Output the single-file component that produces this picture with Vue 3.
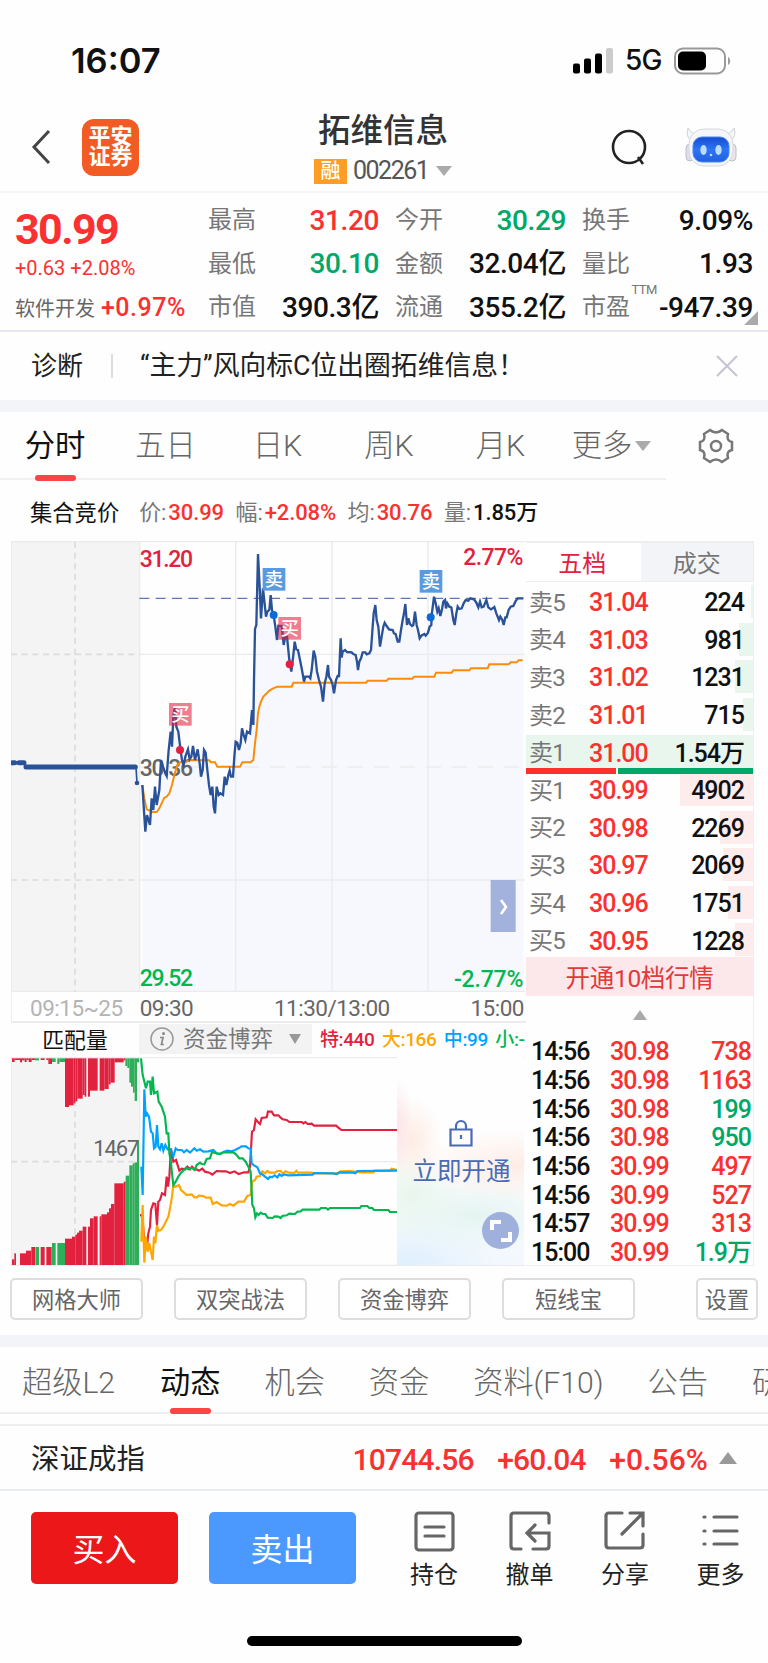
<script setup>
import { ref } from 'vue'

const stats = [
  { label: '最高', value: '31.20', tone: 'up' },
  { label: '今开', value: '30.29', tone: 'down' },
  { label: '换手', value: '9.09%' },
  { label: '最低', value: '30.10', tone: 'down' },
  { label: '金额', value: '32.04亿' },
  { label: '量比', value: '1.93' },
  { label: '市值', value: '390.3亿' },
  { label: '流通', value: '355.2亿' },
  { label: '市盈', value: '-947.39', ttm: true },
]

const periods = ['分时', '五日', '日K', '周K', '月K', '更多']
const activePeriod = ref('分时')

const summary = [
  { label: '价', value: '30.99', tone: 'up' },
  { label: '幅', value: '+2.08%', tone: 'up' },
  { label: '均', value: '30.76', tone: 'up' },
  { label: '量', value: '1.85万' },
]

const orders = [
  { label: '卖5', price: '31.04', volume: '224', depth: 1, side: 'sell' },
  { label: '卖4', price: '31.03', volume: '981', depth: 6, side: 'sell' },
  { label: '卖3', price: '31.02', volume: '1231', depth: 8, side: 'sell' },
  { label: '卖2', price: '31.01', volume: '715', depth: 4.4, side: 'sell' },
  { label: '卖1', price: '31.00', volume: '1.54万', depth: 100, side: 'sell' },
  { label: '买1', price: '30.99', volume: '4902', depth: 32, side: 'buy' },
  { label: '买2', price: '30.98', volume: '2269', depth: 14.6, side: 'buy' },
  { label: '买3', price: '30.97', volume: '2069', depth: 13.3, side: 'buy' },
  { label: '买4', price: '30.96', volume: '1751', depth: 11.2, side: 'buy' },
  { label: '买5', price: '30.95', volume: '1228', depth: 7.8, side: 'buy' },
]

const ticks = [
  { time: '14:56', price: '30.98', volume: '738', tone: 'up' },
  { time: '14:56', price: '30.98', volume: '1163', tone: 'up' },
  { time: '14:56', price: '30.98', volume: '199', tone: 'down' },
  { time: '14:56', price: '30.98', volume: '950', tone: 'down' },
  { time: '14:56', price: '30.99', volume: '497', tone: 'up' },
  { time: '14:56', price: '30.99', volume: '527', tone: 'up' },
  { time: '14:57', price: '30.99', volume: '313', tone: 'up' },
  { time: '15:00', price: '30.99', volume: '1.9万', tone: 'down' },
]

const tools = ['网格大师', '双突战法', '资金博弈', '短线宝']
const sections = ['超级L2', '动态', '机会', '资金', '资料(F10)', '公告', '研']
const activeSection = ref('动态')

// the charts are drawn in units of a third of a pixel
const priceLine =
  '427,765 436,905 441,855 450,885 455,805 460,840 465,770 470,825 478,780 483,690 489,710 496,730 500,738 506,660 512,605 516,650 520,560 525,530 529,590 535,605 541,655 546,690 551,705 556,680 564,658 569,688 574,680 579,648 585,690 593,658 599,700 603,740 608,720 612,660 617,668 622,720 627,765 632,795 637,770 641,830 645,850 650,770 656,795 661,790 669,795 674,740 679,765 685,735 689,722 693,740 699,740 703,680 707,635 712,638 717,660 722,640 726,595 731,615 736,630 741,605 750,610 756,540 760,585 762,450 765,297 769,285 774,72 779,170 783,265 789,175 798,260 802,245 808,240 812,195 816,240 821,255 826,290 831,330 835,287 845,288 851,345 856,318 861,320 868,390 874,425 880,375 884,335 889,358 894,360 900,390 906,420 912,455 916,440 927,440 931,445 935,420 941,362 946,380 951,425 957,450 963,470 969,515 974,460 979,440 984,405 987,440 993,450 998,465 1002,490 1008,450 1013,438 1017,438 1022,325 1025,383 1028,365 1035,360 1041,366 1055,367 1060,372 1067,375 1071,395 1074,420 1078,395 1083,385 1088,367 1096,367 1100,373 1108,370 1113,360 1118,290 1121,250 1126,225 1130,270 1135,290 1140,350 1145,320 1150,290 1154,278 1160,288 1167,298 1178,300 1182,310 1187,312 1193,335 1198,335 1203,300 1208,270 1212,250 1216,222 1221,285 1225,265 1230,282 1236,288 1240,285 1245,245 1250,285 1254,300 1259,325 1265,316 1273,312 1277,317 1284,308 1289,290 1294,285 1295,255 1302,200 1307,220 1312,245 1316,235 1321,258 1326,238 1330,215 1335,210 1338,235 1342,220 1348,230 1354,232 1360,270 1364,285 1369,250 1373,230 1378,237 1385,235 1391,220 1397,210 1405,212 1411,205 1422,208 1429,218 1435,232 1440,215 1445,232 1451,230 1459,210 1465,232 1473,238 1478,235 1483,231 1489,250 1497,270 1501,260 1507,270 1511,285 1516,262 1520,262 1526,240 1532,230 1540,228 1546,215 1553,205 1570,205'
const averageLine =
  '427,765 433,805 440,838 450,842 457,846 470,846 478,835 485,820 493,803 500,800 508,790 516,765 523,735 532,705 540,697 555,697 570,690 628,691 632,697 645,697 652,710 720,710 727,697 752,697 760,690 765,640 770,600 774,550 778,530 783,515 790,500 798,492 808,482 818,476 832,470 875,470 880,458 1098,458 1103,452 1160,452 1165,446 1237,446 1242,440 1303,440 1308,428 1355,428 1360,421 1408,421 1413,415 1463,415 1468,403 1526,403 1532,397 1550,397 1556,391 1568,391'

const flows = [
  {
    name: '特', value: '440', color: '#e2213f',
    points: '420,705 424,705 428,720 433,790 440,810 445,760 450,740 453,690 460,670 466,672 471,735 475,665 480,660 486,640 495,645 500,590 504,620 508,590 513,505 520,545 528,540 538,572 545,566 556,568 562,560 570,568 576,560 583,568 590,568 597,572 607,566 615,575 628,578 637,584 650,573 665,574 678,574 690,579 703,574 716,582 732,577 745,577 750,560 756,455 762,450 767,418 773,425 780,432 785,414 800,412 804,395 815,395 822,406 835,406 842,413 848,418 860,420 868,426 905,426 910,430 916,426 923,432 935,431 942,437 1008,437 1015,443 1024,450 1192,450',
  },
  {
    name: '大', value: '166', color: '#ffa600',
    points: '424,785 428,675 433,848 438,770 443,815 448,790 453,815 458,840 462,770 466,790 471,735 475,752 483,750 490,740 500,720 505,710 511,680 516,650 520,615 527,620 537,615 543,630 552,638 560,645 575,643 583,652 590,652 597,647 610,648 618,653 632,653 638,672 650,666 665,676 680,677 690,672 700,677 715,665 732,665 742,648 752,645 757,605 765,600 770,590 780,588 787,574 795,580 802,573 810,578 825,578 832,573 842,573 848,580 857,574 865,578 883,579 889,572 893,578 935,578 942,580 1015,580 1022,574 1050,573 1065,575 1080,577 1120,577 1125,572 1170,572 1175,566 1192,570',
  },
  {
    name: '中', value: '99', color: '#00a2ff',
    points: '424,560 428,645 433,328 437,410 441,400 447,410 453,455 458,460 462,505 467,500 471,435 475,500 480,508 485,490 490,512 496,495 503,508 510,508 515,515 520,530 527,505 533,510 545,510 552,517 560,510 570,518 583,505 590,512 600,508 610,515 625,514 640,510 650,520 660,522 672,515 682,512 695,514 705,510 715,505 725,499 738,499 745,505 752,506 755,550 762,556 772,562 780,580 787,583 795,590 804,597 810,590 816,592 824,586 832,592 838,583 845,588 852,583 865,586 938,584 942,579 1000,580 1010,582 1018,577 1060,578 1066,580 1072,573 1192,572',
  },
  {
    name: '小', value: '-', color: '#00b84f',
    points: '423,235 428,285 433,305 438,325 443,305 450,305 453,345 458,290 462,340 472,335 476,365 485,380 490,395 495,410 500,460 505,460 508,520 512,540 516,580 520,615 527,605 535,590 543,578 552,570 558,563 565,568 575,563 584,570 590,555 600,548 605,552 613,553 620,537 630,535 636,516 650,520 660,522 670,517 700,517 708,523 718,535 728,535 737,545 745,560 752,575 757,675 762,685 766,712 771,700 776,705 782,698 788,702 796,702 803,713 818,714 824,709 835,710 842,714 847,708 860,706 868,701 885,702 892,695 902,694 908,689 958,689 963,684 978,684 984,689 990,684 1080,684 1084,678 1102,678 1108,684 1117,684 1122,690 1165,690 1170,696 1192,696',
  },
]

// auction bars: [left, right, end, falling]
const matched = [
  [36, 43, 838], [43, 48, 820], [60, 78, 820], [78, 94, 812], [94, 105, 801], [106, 117, 801, 1],
  [122, 134, 801], [139, 155, 801], [156, 167, 789, 1], [172, 195, 789, 1], [195, 216, 776],
  [216, 226, 770], [226, 231, 764], [231, 237, 758], [237, 248, 752], [248, 259, 740],
  [264, 270, 740], [270, 281, 715], [281, 293, 709], [299, 304, 709], [304, 321, 703],
  [321, 327, 697], [327, 333, 685], [333, 343, 672], [343, 371, 610], [371, 377, 605],
  [377, 388, 587, 1], [388, 398, 556, 1], [398, 404, 550, 1], [404, 411, 547, 1], [411, 417, 480, 1],
]
const unmatched = [
  [36, 44, 246], [44, 60, 240], [60, 66, 247], [66, 74, 241], [74, 80, 246], [80, 86, 240],
  [86, 95, 246], [95, 105, 240], [105, 117, 241, 1], [122, 134, 240], [139, 145, 240], [145, 156, 252],
  [156, 167, 246, 1], [172, 178, 252, 1], [178, 195, 246, 1], [195, 207, 381], [207, 221, 376],
  [221, 226, 370], [226, 232, 364], [232, 248, 356], [248, 254, 345], [254, 259, 350],
  [264, 270, 350], [270, 293, 332], [299, 313, 332], [313, 326, 327], [326, 332, 313],
  [332, 344, 308], [344, 371, 247], [371, 376, 241], [376, 382, 258, 1], [382, 388, 264, 1],
  [388, 393, 308, 1], [393, 399, 320, 1], [399, 404, 338, 1], [404, 411, 363, 1], [411, 417, 247, 1],
]
</script>

<template>
  <div class="screen">
    <div class="status">
      <span class="clock">16:07</span>
      <div class="status-right">
        <svg class="signal" width="40" height="26" viewBox="0 0 40 26">
          <rect x="0" y="15.500" width="7" height="10" rx="2" />
          <rect x="11" y="10.500" width="7" height="15" rx="2" />
          <rect x="22" y="5.500" width="7" height="20" rx="2" />
          <rect x="33" y="0" width="7" height="25.500" rx="2" fill="#ccc" />
        </svg>
        <span class="network">5G</span>
        <svg width="58" height="28" viewBox="0 0 58 28">
          <rect x="1" y="1.500" width="50" height="25" rx="8" fill="none" stroke="#999" stroke-width="2" />
          <rect x="4" y="4.500" width="28" height="19" rx="5" />
          <path d="M54 10c3 2 3 6 0 8z" fill="#999" />
        </svg>
      </div>
    </div>

    <header class="header">
      <svg class="back" width="20" height="36" viewBox="0 0 20 36"><path d="M18 2L3 18l15 16" /></svg>
      <div class="logo"><span>平安</span><span>证券</span></div>
      <div class="heading">
        <h1>拓维信息</h1>
        <div class="code"><span class="margin-tag">融</span><span class="num">002261</span><i class="tri" /></div>
      </div>
      <svg class="search" width="38" height="38" viewBox="0 0 38 38"><circle cx="19" cy="19" r="16" /><path d="M28 29l5 7" /></svg>
      <svg width="52" height="42" viewBox="0 0 52 42">
        <defs>
          <linearGradient id="face" x1="0" y1="0" x2="0" y2="1"><stop offset="0" stop-color="#174bd0" /><stop offset=".5" stop-color="#2e74f5" /><stop offset="1" stop-color="#2160df" /></linearGradient>
        </defs>
        <path d="M3 2Q0 11 7 15L14 8Q7 9 3 2zM49 2q3 9-4 13l-7-7q7 1 11-6z" fill="#f4f6fa" stroke="#d0d3db" />
        <rect x="1" y="18" width="8" height="17" rx="4" fill="#dcdfe6" stroke="#bcc0ca" />
        <rect x="43" y="18" width="8" height="17" rx="4" fill="#eee3e6" stroke="#bcc0ca" />
        <rect x="4" y="3" width="44" height="37" rx="15" fill="#f5f6fa" stroke="#d5d8e0" />
        <rect x="8" y="11" width="36" height="25" rx="9" fill="url(#face)" stroke="#4485ff" />
        <ellipse cx="18.500" cy="24" rx="3.200" ry="5" fill="#b9dcff" /><ellipse cx="33.500" cy="24" rx="3.200" ry="5" fill="#b9dcff" />
        <circle cx="26" cy="29" r="1.300" fill="#b9dcff" />
      </svg>
    </header>

    <section class="quote">
      <div class="last">
        <strong class="up">30.99</strong>
        <p class="change up">+0.63 +2.08%</p>
        <p class="sector">软件开发 <b class="up">+0.97%</b></p>
      </div>
      <div class="stats">
        <div v-for="item in stats" :key="item.label" class="stat">
          <span>{{ item.label }}</span>
          <sup v-if="item.ttm">TTM</sup>
          <b :class="item.tone">{{ item.value }}</b>
        </div>
      </div>
      <i class="corner" />
    </section>

    <section class="notice">
      <span class="notice-title">诊断</span>
      <p>“主力”风向标C位出圈拓维信息！</p>
      <svg width="22" height="22" viewBox="0 0 22 22"><path d="M1 1l20 20M21 1L1 21" stroke="#c4c4d2" stroke-width="2" /></svg>
    </section>

    <nav class="periods">
      <ul>
        <li v-for="period in periods" :key="period" :class="{ active: period === activePeriod }" @click="activePeriod = period">
          {{ period }}<i v-if="period === '更多'" class="tri" />
        </li>
      </ul>
      <svg class="gear" width="36" height="36" viewBox="0 0 36 36">
        <path d="M12 2Q18 7 24 2L30 6Q28 13 34 14V22Q28 23 30 30L24 34Q18 29 12 34L6 30Q8 23 2 22V14Q8 13 6 6Z" />
        <circle cx="18" cy="18" r="5" />
      </svg>
    </nav>

    <div class="summary">
      <span class="auction">集合竞价</span>
      <span v-for="item in summary" :key="item.label" class="summary-item">{{ item.label }}:<b :class="item.tone">{{ item.value }}</b></span>
    </div>

    <main class="market">
      <div class="charts">
        <svg width="514" height="451" viewBox="33 33 1542 1353">
          <rect x="33" y="33" width="386" height="1353" fill="#f4f4f4" />
          <polygon :points="`427,1386 ${priceLine} 1570,1386`" fill="#f6f8fd" />
          <path class="grid" d="M33 35H1575M419 35V1386M707 35V1386M996 35V1386M1284 35V1386M419 373H1575M419 1050H1575M33 1384H1575M34 35V1386" />
          <path class="grid dashed-wide" d="M419 711H1570" />
          <path class="dashed" d="M225 36V1386M33 373H419M33 1050H419" />
          <path class="close" d="M418 205H1570" />
          <path class="preopen" d="M36 706V698H74L78 711H408L411 759" />
          <path class="preopen-thick" d="M38 698H44M57 698H72M78 711H406" />
          <circle cx="411" cy="759" r="7" fill="#2a5298" />
          <g class="labels" font-size="69">
            <text x="419" y="111" fill="#e2213f" textLength="160">31.20</text>
            <text x="419" y="738" fill="#666" textLength="160">30.36</text>
            <text x="419" y="1367" fill="#00b84f" textLength="160">29.52</text>
            <text x="1570" y="105" fill="#e2213f" text-anchor="end" textLength="180">2.77%</text>
            <text x="1570" y="1371" fill="#00b84f" text-anchor="end" textLength="208">-2.77%</text>
          </g>
          <polyline class="average" :points="averageLine" />
          <polyline class="price" :points="priceLine" />
          <g class="trades">
            <circle cx="540" cy="660" r="12" fill="#e2213f" />
            <circle cx="869" cy="403" r="12" fill="#e2213f" />
            <circle cx="821" cy="255" r="12" fill="#0a6bd6" />
            <circle cx="1292" cy="262" r="12" fill="#0a6bd6" />
            <rect x="507" y="519" width="68" height="68" fill="#e2213f" opacity=".58" />
            <rect x="835" y="261" width="68" height="68" fill="#e2213f" opacity=".58" />
            <rect x="788" y="114" width="68" height="68" fill="#5b9ade" />
            <rect x="1259" y="120" width="68" height="68" fill="#5b9ade" />
            <text x="541" y="574">买</text><text x="869" y="315">买</text>
            <text x="822" y="168">卖</text><text x="1293" y="174">卖</text>
          </g>
          <rect x="1472" y="1050" width="75" height="156" fill="#a3b2dc" />
          <path d="M1503 1110L1518 1131L1503 1152" fill="none" stroke="#fff" stroke-width="8" />
        </svg>
        <div class="axis">
          <span class="axis-auction">09:15~25</span>
          <span>09:30</span><span>11:30/13:00</span><span>15:00</span>
        </div>
        <div class="flow-head">
          <span class="match">匹配量</span>
          <div class="flow-select">
            <svg width="24" height="24" viewBox="0 0 24 24"><circle cx="12" cy="12" r="11" fill="none" stroke="#999" stroke-width="1.500" /><circle cx="13.500" cy="6.500" r="1.500" fill="#888" /><path d="M10 10.500h3l-1.600 7h2.500" fill="none" stroke="#888" stroke-width="1.700" /></svg>
            <span>资金博弈</span><i class="tri" />
          </div>
          <div class="flow-values">
            <span v-for="flow in flows" :key="flow.name" :style="{ color: flow.color }">{{ flow.name }}:{{ flow.value }}</span>
          </div>
        </div>
        <div class="flow">
          <svg width="514" height="209" viewBox="33 231 1542 627">
            <rect x="33" y="231" width="386" height="627" fill="#f4f4f4" />
            <path class="grid" d="M33 233H1575M419 545H1575M419 233V858M33 856H1575M34 233V856" />
            <path class="dashed" d="M225 233V856M33 545H419" />
            <rect v-for="bar in matched" :key="'m' + bar[0]" :x="bar[0]" :y="bar[2]" :width="bar[1] - bar[0]" :height="855 - bar[2]" :fill="bar[3] ? '#2fae59' : '#e2213f'" />
            <rect v-for="bar in unmatched" :key="'u' + bar[0]" :x="bar[0]" y="235" :width="bar[1] - bar[0]" :height="bar[2] - 235" :fill="bar[3] ? '#2fae59' : '#e2213f'" />
            <text x="280" y="528" class="match-value" textLength="138">1467</text>
            <polyline v-for="flow in flows" :key="flow.name" :points="flow.points" :stroke="flow.color" class="flow-line" />
          </svg>
          <div class="locked">
            <svg width="24" height="28" viewBox="0 0 24 28"><path d="M1.500 10.500h21v16h-21zM7 10V7a5 5 0 0 1 10 0v3M12 16v4" fill="none" stroke="#4a69b8" stroke-width="2.200" /></svg>
            <span>立即开通</span>
            <div class="expand">
              <svg width="22" height="22" viewBox="0 0 22 22"><path d="M2 10V2h9M20 12v8h-9" fill="none" stroke="#fff" stroke-width="4" /></svg>
            </div>
          </div>
        </div>
      </div>

      <aside class="book">
        <div class="book-tabs"><span class="active">五档</span><span>成交</span></div>
        <div class="orders">
          <div v-for="order in orders" :key="order.label" class="order" :class="order.side">
            <i class="depth" :style="{ width: order.depth + '%' }" />
            <span>{{ order.label }}</span>
            <b class="up">{{ order.price }}</b>
            <b class="volume">{{ order.volume }}</b>
          </div>
          <div class="ratio"><i /><i /></div>
        </div>
        <div class="upgrade">开通10档行情</div>
        <div class="collapse"><i class="tri tri-up" /></div>
        <ul class="ticks">
          <li v-for="(tick, index) in ticks" :key="index">
            <span>{{ tick.time }}</span><span class="up">{{ tick.price }}</span><span :class="tick.tone">{{ tick.volume }}</span>
          </li>
        </ul>
      </aside>
    </main>

    <div class="tools">
      <button v-for="tool in tools" :key="tool">{{ tool }}</button>
      <button class="settings">设置</button>
    </div>

    <nav class="sections">
      <span v-for="section in sections" :key="section" :class="{ active: section === activeSection }" @click="activeSection = section">{{ section }}</span>
    </nav>

    <div class="index">
      <span>深证成指</span>
      <b>10744.56</b><b>+60.04</b><b class="percent">+0.56%</b>
      <i class="tri tri-up" />
    </div>

    <footer class="footer">
      <button class="buy">买入</button>
      <button class="sell">卖出</button>
      <div class="actions">
        <a>
          <svg width="42" height="42" viewBox="0 0 42 42"><rect x="3" y="2" width="37" height="37" rx="3" /><path d="M12 16h19M12 25h19" /></svg>
          持仓
        </a>
        <a>
          <svg width="42" height="42" viewBox="0 0 42 42"><path d="M40 12V5q0-3-3-3H5Q2 2 2 5v30q0 3 3 3h7M24 38h13q3 0 3-3V22H19M26 14l-8 8 8 8" /></svg>
          撤单
        </a>
        <a>
          <svg width="42" height="42" viewBox="0 0 42 42"><path d="M18 2H5Q2 2 2 5v29q0 3 3 3h31q3 0 3-3V23M26 2h13v13M38 3L18 23" /></svg>
          分享
        </a>
        <a>
          <svg width="42" height="42" viewBox="0 0 42 42"><path d="M14 6h23M14 20h23M14 33h23" /><path d="M4 6h1M4 20h1M4 33h1" /></svg>
          更多
        </a>
      </div>
    </footer>
    <div class="home-bar" />
  </div>
</template>

<style>
body {
  background: #fefefe;
}
</style>

<style scoped>
.screen {
  display: flex;
  flex-direction: column;
  width: 768px;
  height: 1663px;
  overflow: hidden;
  background: #fefefe;
  color: #111;
  font-family: Roboto, "Noto Sans CJK SC", sans-serif;
  line-height: 1.2;

  & > * {
    flex-shrink: 0;
  }

  & * {
    box-sizing: border-box;
  }

  & b,
  & strong {
    font-weight: 500;
  }

  & p,
  & h1,
  & ul {
    margin: 0;
    padding: 0;
    list-style: none;
  }

  & button {
    padding: 0;
    border: 0;
    font-family: inherit;
    line-height: 1.2;
  }
}

.screen .up {
  color: #fb3030;
}

.screen .down {
  color: #00a868;
}

.tri {
  display: inline-block;
  border: 8px solid transparent;
  border-top: 10px solid #aaa;
  border-bottom: 0;
}

.tri-up {
  border-top: 0;
  border-bottom: 10px solid #aaa;
}

.status {
  display: flex;
  justify-content: space-between;
  height: 96px;
  padding: 26px 36px 0 71px;
  font-family: Inter, sans-serif;
}

.clock {
  font-size: 34.5px;
  font-weight: 600;
  line-height: 70px;
}

.status-right {
  display: flex;
  align-items: center;
  height: 70px;

  & .network {
    width: 38px;
    margin: 0 11px 0 12px;
    font-size: 28px;
    font-weight: 500;
    letter-spacing: -0.7px;
  }
}

.header {
  display: flex;
  align-items: center;
  height: 97px;
  padding: 7px 31px 0 31px;
  border-bottom: 2px solid #f7f7f7;
}

.back path {
  fill: none;
  stroke: #444;
  stroke-width: 3;
}

.logo {
  display: flex;
  flex-direction: column;
  justify-content: center;
  width: 57px;
  height: 57px;
  margin-left: 31px;
  border-radius: 12px;
  background: #f25b24;
  color: #fff;
  font-size: 22px;
  font-weight: 700;
  line-height: 20px;
  text-align: center;
}

.heading {
  display: flex;
  flex-direction: column;
  align-items: center;
  width: 458px;
  height: 88px;
  margin-left: 15px;

  & h1 {
    margin-top: 6px;
    color: #333;
    font-size: 32.5px;
    font-weight: 500;
    line-height: 44px;
  }
}

.code {
  display: flex;
  align-items: center;
  margin-top: 3px;
  color: #555;
  font-size: 25px;
  line-height: 30px;

  & .margin-tag {
    width: 33px;
    height: 25px;
    margin-right: 6px;
    background: #ff9c26;
    color: #fff;
    font-size: 20px;
    font-weight: 500;
    line-height: 25px;
    text-align: center;
  }

  & .num {
    width: 83px;
    letter-spacing: -1.5px;
  }
}

.search {
  margin: 0 37px 0 -2px;
  fill: none;
  stroke: #222;
  stroke-width: 2.6;
}

.quote {
  position: relative;
  display: flex;
  height: 139px;
  border-bottom: 2px solid #e6e7f0;
}

.last {
  width: 208px;
  padding: 13px 0 0 15px;

  & strong {
    display: block;
    font-size: 43px;
    font-weight: 700;
    line-height: 46px;
    letter-spacing: -1.6px;
  }

  & .change {
    margin-top: 5px;
    font-size: 20px;
    line-height: 22px;
    letter-spacing: 0;
  }

  & .sector {
    margin-top: 12px;
    color: #666;
    font-size: 20px;
    line-height: 34px;
    white-space: nowrap;
  }

  & .sector b {
    margin-left: 1px;
    font-size: 25px;
    letter-spacing: 0.5px;
  }
}

.stats {
  display: grid;
  grid-template-columns: 171px 171px 171px;
  grid-template-rows: repeat(3, 43.5px);
  column-gap: 16px;
  padding-top: 6px;
}

.stat {
  display: flex;
  align-items: center;
  justify-content: space-between;
  color: #777;
  font-size: 24px;

  & b {
    color: #111;
    font-size: 28px;
    letter-spacing: -0.4px;
    white-space: nowrap;
  }

  & sup {
    width: 24px;
    margin: -36px -12px 0 -14px;
    font-size: 13px;
    line-height: 14px;
    letter-spacing: -0.5px;
  }
}

.corner {
  position: absolute;
  right: 10px;
  bottom: 5px;
  border: 7px solid #aaa;
  border-top-color: transparent;
  border-left-color: transparent;
}

.notice {
  display: flex;
  align-items: center;
  height: 80px;
  padding: 0 30px 0 31px;
  border-bottom: 12px solid #f3f4f9;
  color: #222;
  font-size: 26.8px;

  & .notice-title {
    width: 82px;
    height: 24px;
    border-right: 2px solid #ddd;
    font-size: 26px;
    line-height: 24px;
  }

  & p {
    flex: 1;
    padding: 1px 0 0 27px;
  }
}

.periods {
  display: flex;
  align-items: center;
  height: 68px;

  & ul {
    display: grid;
    grid-template-columns: 110px 111px 113px 110px 113px 109px;
    width: 666px;
    height: 68px;
    border-bottom: 2px solid #f0f0f0;
  }

  & li {
    position: relative;
    justify-self: center;
    color: #666;
    font-size: 30.3px;
    font-weight: 300;
    line-height: 68px;
    white-space: nowrap;
  }

  & li .tri {
    margin: 0 0 5px 3px;
  }

  & .gear {
    margin-left: 32px;
    fill: none;
    stroke: #777;
    stroke-width: 2.5;
  }
}

.periods li.active,
.sections .active {
  color: #111;
  font-weight: 400;
}

.periods li.active::after,
.sections .active::after {
  content: "";
  position: absolute;
  bottom: -1px;
  left: calc(50% - 20px);
  width: 41px;
  height: 6px;
  border-radius: 3px;
  background: #fa4548;
}

.summary {
  display: flex;
  align-items: center;
  height: 61px;
  padding: 5px 0 0 30px;
  font-size: 22px;
  white-space: nowrap;

  & .auction {
    margin-right: 20px;
    font-size: 22.3px;
  }

  & .summary-item {
    margin-right: 11.5px;
    color: #777;
    letter-spacing: -0.1px;
  }

  & b {
    margin-left: 2px;
    color: #111;
  }
}

.market {
  display: flex;
  height: 725px;
  padding-left: 11px;
}

.charts {
  width: 515px;

  & svg {
    display: block;
  }
}

.grid {
  fill: none;
  stroke: #ebebed;
  stroke-width: 4;
}

.dashed {
  fill: none;
  stroke: #dcdcdc;
  stroke-width: 5;
  stroke-dasharray: 18 14;
}

.dashed-wide {
  stroke-dasharray: 46 32;
}

.close {
  stroke: #5b78b4;
  stroke-width: 4;
  stroke-dasharray: 30 19;
}

.preopen {
  fill: none;
  stroke: #2a5298;
  stroke-width: 5;
}

.preopen-thick {
  fill: none;
  stroke: #2a5298;
  stroke-linecap: round;
  stroke-width: 15;
}

.average {
  fill: none;
  stroke: #fb8c0a;
  stroke-width: 6;
}

.price {
  fill: none;
  stroke: #2a5298;
  stroke-width: 7;
}

.labels {
  font-weight: 500;
}

.trades text {
  fill: #fff;
  font-size: 55px;
  font-weight: 500;
  text-anchor: middle;
}

.match-value {
  fill: #666;
  font-size: 66px;
}

.flow-line {
  fill: none;
  stroke-width: 6.5;
}

.axis {
  display: flex;
  justify-content: space-between;
  align-items: center;
  height: 31px;
  padding: 4px 2px 0 0;
  border-left: 1px solid #eee;
  border-bottom: 2px solid #ececec;
  color: #666;
  font-size: 22.5px;
  letter-spacing: -0.5px;

  & .axis-auction {
    width: 128px;
    margin-right: -81px;
    padding-left: 18px;
    color: #b4b4b4;
  }
}

.flow-head {
  display: flex;
  align-items: center;
  height: 34px;
  overflow: hidden;

  & .match {
    width: 128px;
    padding-top: 2px;
    font-size: 21.8px;
    text-align: center;
  }

  & .flow-values {
    display: flex;
    gap: 7.5px;
    width: 205px;
    margin-left: 8px;
    font-size: 19px;
    font-weight: 500;
    line-height: 30px;
    letter-spacing: -0.4px;
    white-space: nowrap;
  }
}

.flow-select {
  display: flex;
  align-items: center;
  width: 173px;
  height: 30px;
  margin-bottom: 2px;
  padding-left: 11px;
  background: #f3f3f3;
  color: #777;
  font-size: 22.5px;

  & span {
    margin: 0 16px 0 9px;
  }

  & .tri {
    border-width: 10px 6px 0;
    border-top-color: #999;
  }
}

.flow {
  position: relative;
}

.locked {
  position: absolute;
  top: 0;
  right: 2px;
  display: flex;
  flex-direction: column;
  align-items: center;
  width: 127px;
  height: 208px;
  padding-top: 62px;
  background:
    radial-gradient(ellipse 16px 50px at 0 33%, #fce4e8, transparent),
    radial-gradient(ellipse 30px 45px at 12% 40%, #fdece4, transparent),
    radial-gradient(ellipse 100px 36px at 95% 52%, #fdece6, transparent),
    radial-gradient(ellipse 50px 45px at 12% 66%, #e8f6ed, transparent),
    radial-gradient(ellipse 100px 40px at 60% 76%, #e4f4f1, transparent),
    radial-gradient(ellipse 90px 50px at 10% 100%, #dfeffd, transparent),
    linear-gradient(#fefefe 50%, #f3f8fe);
  color: #4a69b8;

  & span {
    margin: 7px 0 0 2px;
    font-size: 24.5px;
    line-height: 36px;
  }
}

.expand {
  position: absolute;
  right: 5px;
  bottom: 16px;
  display: flex;
  align-items: center;
  justify-content: center;
  width: 37px;
  height: 37px;
  border-radius: 50%;
  background: #9fb0dc;
}

.book {
  width: 228px;
  border: 1px solid #eee;
  border-width: 2px 1px 1px 0;
}

.book-tabs {
  display: flex;
  height: 39px;
  border-bottom: 1px solid #eee;
  color: #777;
  font-size: 24px;
  line-height: 42px;
  text-align: center;

  & span {
    flex: 1;
    background: #f3f4f8;
  }

  & .active {
    padding-right: 2px;
    background: #fff;
    color: #e2213f;
  }
}

.orders {
  position: relative;
  padding-top: 2px;
}

.order {
  position: relative;
  display: flex;
  align-items: center;
  height: 37.6px;
  padding: 1px 9px 0 3px;
  color: #777;
  font-size: 24px;

  & span {
    position: relative;
    width: 60px;
    letter-spacing: -0.8px;
  }

  & b {
    position: relative;
    font-size: 25px;
    letter-spacing: -1px;
  }

  & .volume {
    flex: 1;
    color: #111;
    text-align: right;
  }

  & .depth {
    position: absolute;
    top: 1px;
    right: 0;
    height: 33px;
    background: #e9f6ee;
  }

  &.buy .depth {
    background: #feebeb;
  }
}

.ratio {
  position: absolute;
  top: 186px;
  left: 0;
  display: grid;
  grid-template-columns: 90px 1fr;
  gap: 2px;
  width: 100%;
  height: 6px;

  & i {
    background: #fb3030;
  }

  & i + i {
    background: #00a868;
  }
}

.upgrade {
  height: 39px;
  margin-top: -3px;
  background: #fce8ea;
  color: #e03a3c;
  font-size: 24.5px;
  line-height: 43px;
  text-align: center;
  letter-spacing: -0.3px;
}

.collapse {
  display: flex;
  align-items: flex-start;
  justify-content: center;
  height: 42px;
  padding-top: 14px;

  & .tri {
    border-width: 0 7px 10px;
  }
}

.ticks li {
  display: grid;
  grid-template-columns: 79px 60px 1fr;
  align-items: center;
  height: 28.7px;
  padding: 0 2px 0 5px;
  font-size: 25px;
  line-height: 28px;
  letter-spacing: -1px;

  & span {
    font-weight: 500;
  }

  & span:last-child {
    text-align: right;
  }
}

.tools {
  display: flex;
  gap: 31px;
  height: 81px;
  padding: 12px 10px 0 10px;
  border-bottom: 12px solid #f3f4f9;

  & button {
    width: 133px;
    height: 42px;
    border: 2px solid #ddd;
    border-radius: 5px;
    background: #fff;
    color: #666;
    font-size: 22.3px;
    line-height: 40px;
  }

  & .settings {
    width: 62px;
    margin-left: auto;
  }
}

.sections {
  display: flex;
  gap: 44px;
  height: 67px;
  padding-left: 22px;
  border-bottom: 2px solid #eee;
  color: #666;
  font-size: 30.2px;
  font-weight: 300;
  line-height: 72px;
  white-space: nowrap;

  & span {
    position: relative;
    height: 67px;
  }

  & .active {
    margin-left: 1px;
  }

  & .active::after {
    bottom: 0;
  }
}

.index {
  display: flex;
  align-items: center;
  height: 67px;
  margin-top: 10px;
  padding-left: 31px;
  border-top: 2px solid #eee;
  border-bottom: 2px solid #e9ecf4;
  color: #222;
  font-size: 28.5px;

  & span {
    flex: 1;
    padding-top: 6px;
  }

  & b {
    margin-left: 23.5px;
    padding-top: 4px;
    color: #fb3030;
    font-size: 30px;
    letter-spacing: -0.8px;
  }

  & .percent {
    letter-spacing: 0.1px;
  }

  & .tri {
    margin: 0 31px 0 11px;
    border-width: 0 9px 12px;
    border-bottom-color: #999;
  }
}

.footer {
  display: flex;
  padding: 21px 0 0 31px;

  & button {
    width: 147px;
    height: 72px;
    margin-right: 31px;
    padding-top: 4px;
    border-radius: 5px;
    background: #eb1718;
    color: #fff;
    font-size: 32px;
  }

  & .sell {
    background: #4b99ff;
  }
}

.actions {
  display: flex;
  gap: 47.5px;
  height: 86px;
  margin: -1px 0 0 23px;

  & a {
    display: flex;
    flex-direction: column;
    align-items: center;
    width: 48px;
    color: #222;
    font-size: 24px;
    line-height: 45px;
  }

  & svg {
    flex-shrink: 0;
    fill: none;
    stroke: #666;
    stroke-linecap: round;
    stroke-width: 3.2;
  }
}

.home-bar {
  width: 275px;
  height: 10px;
  margin: 39px auto 0;
  border-radius: 5px;
  background: #000;
}
</style>
